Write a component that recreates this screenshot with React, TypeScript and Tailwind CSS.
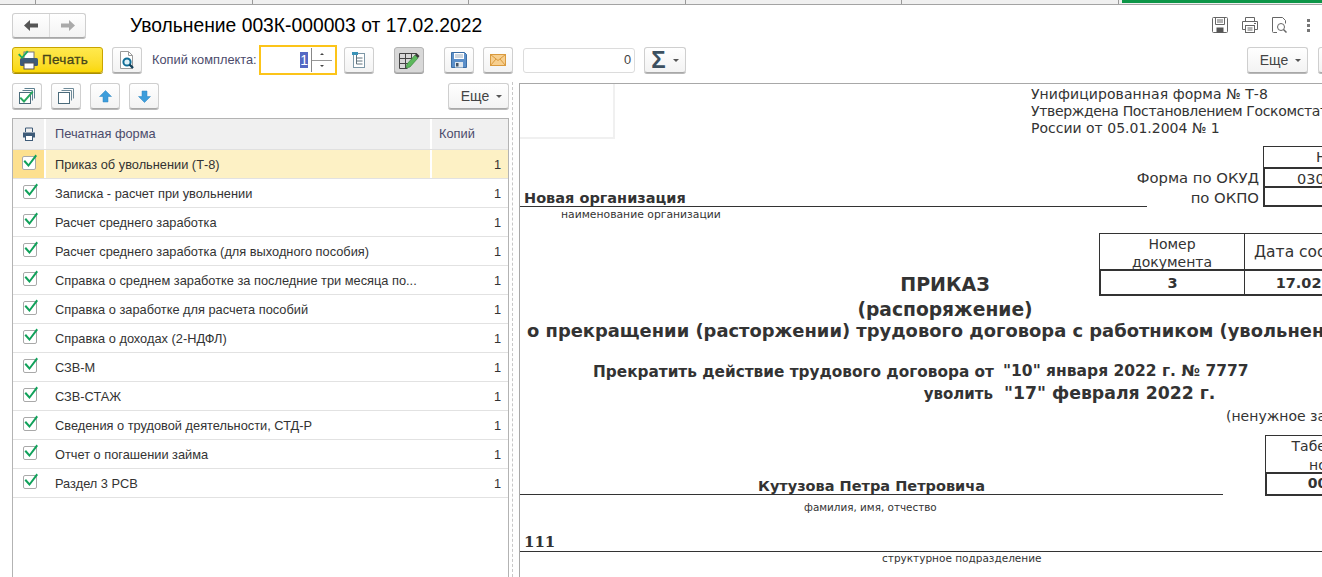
import React from 'react';

const FORMS = [
  'Приказ об увольнении (Т-8)',
  'Записка - расчет при увольнении',
  'Расчет среднего заработка',
  'Расчет среднего заработка (для выходного пособия)',
  'Справка о среднем заработке за последние три месяца по...',
  'Справка о заработке для расчета пособий',
  'Справка о доходах (2-НДФЛ)',
  'СЗВ-М',
  'СЗВ-СТАЖ',
  'Сведения о трудовой деятельности, СТД-Р',
  'Отчет о погашении займа',
  'Раздел 3 РСВ',
];

const TABS = ['w-[36px]', 'w-[217px]', 'w-[216px]', 'w-[217px]', 'w-[216px]', 'w-[217px]'];

const btn =
  'flex shrink-0 items-center justify-center rounded-[3px] border border-[#cfcfcf] border-b-[#a8a8a8] bg-linear-to-b from-white to-[#f3f3f3] shadow-[0_1px_0_#b8b8b8]';

const Caret = () => <span className="ml-[7px] h-0 w-0 border-x-[3px] border-t-[3px] border-x-transparent border-t-[#555]" />;

const Check = () => (
  <svg width="16" height="17" viewBox="0 0 16 17">
    <rect x="0.5" y="3.5" width="13" height="13" rx="1.5" fill="#fff" stroke="#a9a9a9" />
    <path d="M3 7l3.5 4L13.5 1.5l1.5 1.5-8.5 11L1.5 8.5z" fill="#10a15a" />
  </svg>
);

const PrinterColor = () => (
  <svg width="22" height="22" viewBox="0 0 22 22">
    <rect x="6" y="3" width="10" height="7" fill="#fff" stroke="#777" />
    <rect x="2" y="9" width="18" height="8" rx="1.5" fill="#3e5b78" />
    <rect x="6" y="14" width="10" height="6" fill="#fff" stroke="#555" />
    <path d="M1.5 4.5l2.5 3 5-6 1.5 1.3-6.3 7.2L0 5.8z" fill="#1da861" />
  </svg>
);

const Preview = () => (
  <svg width="18" height="20" viewBox="0 0 18 20">
    <path d="M2.5 1.5h8l4 4v13h-12z" fill="#fff" stroke="#9a9a9a" />
    <path d="M10.5 1.5v4h4" fill="none" stroke="#9a9a9a" />
    <circle cx="9" cy="12" r="3.6" fill="#dff1f8" stroke="#0f6d96" strokeWidth="2" />
    <path d="M11.5 14.5l3.5 3.5" stroke="#123f58" strokeWidth="2.4" />
  </svg>
);

const TreeDoc = () => (
  <svg width="16" height="18" viewBox="0 0 16 18">
    <rect x="2.5" y="2.5" width="11" height="14" fill="#fff" stroke="#7d97a6" />
    <rect x="1" y="1" width="6" height="3" fill="#3a93b8" />
    <path d="M5.5 4v9M5.5 7h6M5.5 10h6M5.5 13h6" stroke="#60727c" fill="none" />
  </svg>
);

const TablePencil = () => (
  <svg width="22" height="20" viewBox="0 0 22 20">
    <path d="M1.5 3.5h17M1.5 8.5h17M1.5 13.5h12M1.5 18.5h8M1.5 3.5v15M7.5 3.5v15M13.5 3.5v10" stroke="#444" fill="none" />
    <path d="M8 18l1-4L17 5l3 3-8 9z" fill="#5cb85c" stroke="#2e7d32" strokeWidth="0.6" />
    <path d="M17 5l1.5-2 3 3-1.5 2z" fill="#3a3a3a" />
  </svg>
);

const Floppy = () => (
  <svg width="16" height="16" viewBox="0 0 16 16">
    <path d="M0.5 0.5h13l2 2v13H0.5z" fill="#5b8fc9" stroke="#3b6ea5" />
    <rect x="3" y="1" width="10" height="6" fill="#fff" />
    <path d="M4 3h8M4 5h8" stroke="#9ab" />
    <rect x="4" y="10" width="8" height="5.5" fill="#dfe7ee" />
    <rect x="5" y="11" width="2.5" height="3.5" fill="#456" />
  </svg>
);

const Mail = () => (
  <svg width="16" height="12" viewBox="0 0 16 12">
    <rect x="0.5" y="0.5" width="15" height="11" fill="#f7cf8f" stroke="#d99a3e" />
    <path d="M0.5 0.5L8 6.5l7.5-6M0.5 11.5L6 5M15.5 11.5L10 5" fill="none" stroke="#d99a3e" />
  </svg>
);

const CheckAll = () => (
  <svg width="18" height="18" viewBox="0 0 18 18">
    <path d="M6.5 1.5h10v10M4.5 3.5h10v10" fill="none" stroke="#5b7f8f" />
    <rect x="1.5" y="5.5" width="11" height="11" fill="#fff" stroke="#4a6a7a" />
    <path d="M3 10l3 3 8-9 1.5 1.3L6 16 1.5 11.3z" fill="#27a85f" />
  </svg>
);

const UncheckAll = () => (
  <svg width="18" height="18" viewBox="0 0 18 18">
    <path d="M6.5 1.5h10v10M4.5 3.5h10v10" fill="none" stroke="#6e8a98" />
    <rect x="1.5" y="5.5" width="11" height="11" fill="#fff" stroke="#4a6a7a" />
  </svg>
);

const Arrow = ({ down }: { down?: boolean }) => (
  <svg width="13" height="13" viewBox="0 0 13 13">
    <path d={down ? 'M4 1h5v5.5h3.5L6.5 12.5 .5 6.5H4z' : 'M4 12h5V6.5h3.5L6.5 .5 .5 6.5H4z'} fill="#3d9ddb" stroke="#2f86c0" strokeWidth="0.5" />
  </svg>
);

const GrayIcons = () => (
  <div className="mr-[12px] flex items-center gap-[14px]">
    <svg width="16" height="16" viewBox="0 0 16 16" fill="none" stroke="#666">
      <path d="M.5 1.5a1 1 0 0 1 1-1h13a1 1 0 0 1 1 1v13a1 1 0 0 1-1 1h-13a1 1 0 0 1-1-1z" />
      <path d="M3.5.5v7h9v-7M5 3h6M5 5h6" />
      <rect x="4.5" y="10.5" width="7" height="5" fill="#555" stroke="none" />
    </svg>
    <svg width="16" height="16" viewBox="0 0 16 16" fill="none" stroke="#666">
      <path d="M3.5 4.5V.5h9v4M3.5 12.5h-3v-8h15v8h-3" />
      <rect x="3.5" y="8.5" width="9" height="7" />
      <path d="M5.5 11h5M5.5 13h5M12 6.5h2" />
    </svg>
    <svg width="16" height="16" viewBox="0 0 16 16" fill="none" stroke="#666">
      <path d="M5 15.5H1.5a1 1 0 0 1-1-1V.5h10l3 3v3" />
      <circle cx="9" cy="10" r="3.5" />
      <path d="M11.5 12.5l3 3" strokeWidth="1.5" />
    </svg>
    <div className="ml-[5px] flex flex-col gap-[2px]">
      <span className="h-[3px] w-[3px] bg-[#777]" />
      <span className="h-[3px] w-[3px] bg-[#777]" />
      <span className="h-[3px] w-[3px] bg-[#777]" />
    </div>
  </div>
);

const Doc = () => (
  <div className="w-[1100px] font-['DejaVu_Sans',sans-serif] text-[14px] text-[#333]">
    <div className="flex h-[55px]">
      <div className="h-[55px] w-[95px] border-r-2 border-b-2 border-[#f0f0f0]" />
      <div className="ml-[416px] pt-[2px] leading-[17px] whitespace-nowrap">
        <div className="tracking-[0.07px]">Унифицированная форма № Т-8</div>
        <div className="tracking-[-0.35px]">Утверждена Постановлением Госкомстата</div>
        <div>России от 05.01.2004 № 1</div>
      </div>
    </div>
    <div className="flex h-[68px]">
      <div className="flex w-[627px] items-end border-b border-[#333] pl-[4px] text-[14.5px] leading-[16px] font-bold">Новая организация</div>
      <div className="w-[112px] pt-[29px] text-right text-[14.8px] leading-[20px] whitespace-nowrap">
        <div className="ml-[-20px]">Форма по ОКУД</div>
        <div>по ОКПО</div>
      </div>
      <div className="mt-[7px] ml-[4px] w-[120px] text-[14.5px] leading-[20px]">
        <div className="h-[21px] border border-b-0 border-[#333] pl-[52px]">Номер</div>
        <div className="h-[21px] border-2 border-[#333] pl-[32px]">0301006</div>
        <div className="h-[19px] border-2 border-t-0 border-[#333]" />
      </div>
    </div>
    <div className="h-[15px] pl-[41px] text-[10.8px] leading-[15px]">наименование организации</div>
    <div className="flex h-[74px] items-end">
      <div className="ml-[331px] w-[188px] text-center text-[19px] leading-[24px] font-bold">ПРИКАЗ</div>
      <div className="ml-[60px] flex h-[63px] w-[300px] border border-[#333] text-center text-[14px] leading-[18px]">
        <div className="flex w-[145px] shrink-0 flex-col border-r border-[#333]">
          <div className="h-[37px] border-b-2 border-[#333] px-[20px] pt-[1px]">Номер документа</div>
          <div className="flex-1 border-b border-l border-[#333] pt-[3px] text-[14.5px] font-bold">3</div>
        </div>
        <div className="flex min-w-0 flex-1 flex-col">
          <div className="h-[37px] border-b-2 border-[#333] pt-[9px] pl-[9px] text-left text-[15.5px] whitespace-nowrap">Дата составления</div>
          <div className="flex-1 border-b border-[#333] pt-[3px] text-[14.5px] font-bold">17.02.2022</div>
        </div>
      </div>
    </div>
    <div className="mt-[3px] h-[21px] w-[850px] text-center text-[18.7px] leading-[21px] font-bold">(распоряжение)</div>
    <div className="pl-[7px] text-[17.9px] leading-[22px] font-bold whitespace-nowrap">о прекращении (расторжении) трудового договора с работником (увольнении)</div>
    <div className="mt-[19px] flex h-[22px] items-center text-[15.3px] font-bold whitespace-nowrap">
      <div className="ml-[73px] w-[402px]">Прекратить действие трудового договора от</div>
      <div className="ml-[8px] text-[15.5px]">"10" января 2022 г. № 7777</div>
    </div>
    <div className="flex h-[22px] items-center font-bold whitespace-nowrap">
      <div className="w-[473px] text-right text-[15px]">уволить</div>
      <div className="ml-[11px] text-[17.3px]">"17" февраля 2022 г.</div>
    </div>
    <div className="ml-[706px] h-[22px] leading-[22px] whitespace-nowrap">(ненужное зачеркнуть)</div>
    <div className="flex h-[68px] items-end">
      <div className="flex h-[16px] w-[703px] items-center justify-center border-b border-[#333] text-[14.5px] font-bold">Кутузова Петра Петровича</div>
      <div className="mt-[8px] ml-[42px] flex h-[61px] w-[134px] flex-col self-start border border-[#333] text-center leading-[19px]">
        <div className="h-[38px] border-b-2 border-[#333] px-[20px] pt-[1px]">Табельный номер</div>
        <div className="flex-1 border-x border-b border-[#333] font-bold">00000</div>
      </div>
    </div>
    <div className="h-[24px] pl-[284px] text-[10.4px] leading-[24px]">фамилия, имя, отчество</div>
    <div className="flex h-[33px] items-end border-b border-[#333] pl-[4px] font-['DejaVu_Serif',serif] text-[15px] leading-[18px] font-bold">111</div>
    <div className="pl-[362px] text-[10.5px] leading-[13px]">структурное подразделение</div>
  </div>
);

export default function App() {
  return (
    <div className="h-[577px] w-[1322px] overflow-hidden bg-white font-['Liberation_Sans',Arial,sans-serif] text-[12.8px] text-[#333]">
      <div className="flex h-[5px] border-b border-[#a3a3a3] bg-[#f0f0f0]">
        {TABS.map((w, i) => (
          <div key={i} className={`${w} border-r border-[#9a9a9a]`} />
        ))}
        <div className="ml-[3px] h-[3px] flex-1 bg-[#0d9648]" />
      </div>

      <div className="flex h-[40px] items-center pl-3">
        <div className={`${btn} h-[25px] w-[74px]`}>
          <div className="flex h-full w-[37px] items-center justify-center border-r border-[#dcdcdc]">
            <svg width="14" height="11" viewBox="0 0 14 11"><path d="M6 0v3.5h8v4H6V11L0 5.5z" fill="#555" /></svg>
          </div>
          <div className="flex h-full flex-1 items-center justify-center">
            <svg width="14" height="11" viewBox="0 0 14 11"><path d="M8 0v3.5H0v4h8V11l6-5.5z" fill="#aaa" /></svg>
          </div>
        </div>
        <h1 className="ml-[44px] pt-[1px] text-[19.3px] leading-[24px] text-black">Увольнение 003К-000003 от 17.02.2022</h1>
        <div className="ml-auto">
          <GrayIcons />
        </div>
      </div>

      <div className="mb-[8px] flex h-[30px] items-center overflow-hidden pl-3">
        <button className="flex h-[26px] w-[91px] shrink-0 items-center rounded-[3px] border border-[#c9a400] bg-linear-to-b from-[#ffe94d] to-[#fad800] pl-[5px] text-[13.5px] tracking-[0.3px] text-[#45451a] shadow-[0_1px_0_#a89000] [-webkit-text-stroke:0.3px_#45451a]">
          <PrinterColor />
          <span className="ml-[2px]">Печать</span>
        </button>
        <div className={`${btn} ml-[9px] h-[26px] w-[30px]`}><Preview /></div>
        <span className="ml-[10px] w-[104px] shrink-0 whitespace-nowrap text-[#4b4b6b]">Копий комплекта:</span>
        <div className="ml-[3px] flex h-[30px] w-[78px] shrink-0 items-center justify-end border-2 border-[#fcc419] pr-[3px] text-[14px]">
          <span className="bg-[#5468c4] leading-[16px] text-white">1</span>
          <div className="ml-[3px] flex h-[24px] w-[21px] flex-col border-l border-[#888]">
            <div className="flex flex-1 items-center justify-center border-b border-[#999]"><span className="h-0 w-0 border-x-[2px] border-b-[2px] border-x-transparent border-b-[#444]" /></div>
            <div className="flex flex-1 items-center justify-center"><span className="h-0 w-0 border-x-[2px] border-t-[2px] border-x-transparent border-t-[#444]" /></div>
          </div>
        </div>
        <div className={`${btn} ml-[7px] h-[26px] w-[30px]`}><TreeDoc /></div>
        <div className="ml-[20px] flex h-[26px] w-[30px] shrink-0 items-center justify-center rounded-[3px] border border-[#b5b5b5] bg-[#d8d8d8] shadow-[0_1px_0_#a0a0a0]"><TablePencil /></div>
        <div className={`${btn} ml-[20px] h-[26px] w-[30px]`}><Floppy /></div>
        <div className={`${btn} ml-[9px] h-[26px] w-[30px]`}><Mail /></div>
        <div className="ml-[10px] flex h-[25px] w-[112px] shrink-0 items-center justify-end rounded-[3px] border border-[#dcdcdc] pr-[3px] text-[#444]">0</div>
        <div className={`${btn} ml-[9px] h-[26px] w-[42px] text-[#3c5060]`}>
          <span className="text-[24px] leading-[20px] font-bold">Σ</span>
          <Caret />
        </div>
        <div className={`${btn} ml-[561px] h-[26px] w-[61px] pl-[6px] text-[14px] text-[#444]`}>
          Еще
          <Caret />
        </div>
        <div className={`${btn} ml-[10px] h-[26px] w-[30px]`} />
      </div>

      <div className="flex h-[494px]">
        <div className="ml-3 w-[497px] shrink-0">
          <div className="flex h-[35px] items-start">
            <div className={`${btn} h-[26px] w-[30px]`}><CheckAll /></div>
            <div className={`${btn} ml-[9px] h-[26px] w-[30px]`}><UncheckAll /></div>
            <div className={`${btn} ml-[9px] h-[26px] w-[30px]`}><Arrow /></div>
            <div className={`${btn} ml-[9px] h-[26px] w-[30px]`}><Arrow down /></div>
            <div className={`${btn} ml-auto h-[26px] w-[61px] pl-[6px] text-[14px] text-[#444]`}>
              Еще
              <Caret />
            </div>
          </div>
          <div className="h-[459px] border-x border-t border-[#b3b3b3]">
            <div className="flex h-[31px] border-b border-[#e0e0e0] bg-[#f0f0f0] text-[#4b4b6b]">
              <div className="flex w-[33px] items-center justify-center border-r-2 border-white">
                <svg width="14" height="14" viewBox="0 0 14 14">
                  <path d="M3.5 5V1h7v4" fill="none" stroke="#3e5b78" />
                  <path d="M1 5.5h12a1 1 0 0 1 0 0v5H1z" fill="#3e5b78" />
                  <rect x="3.5" y="8.5" width="7" height="5" fill="#fff" stroke="#3e5b78" />
                </svg>
              </div>
              <div className="flex flex-1 items-center pl-[9px]">Печатная форма</div>
              <div className="flex w-[78px] items-center border-l-2 border-white pl-[7px]">Копий</div>
            </div>
            {FORMS.map((name, i) => (
              <div key={name} className={`flex h-[29px] border-b border-[#e2e2e2] ${i === 0 ? 'bg-[#fdf1c5]' : ''}`}>
                <div className={`flex w-[33px] justify-center pt-[3px] pl-[2px] ${i === 0 ? 'border-r-2 border-white bg-[#fde08f]' : ''}`}><Check /></div>
                <div className="flex flex-1 items-center pt-[2px] pl-[9px]">{name}</div>
                <div className={`flex w-[78px] items-center justify-end pt-[2px] pr-[7px] ${i === 0 ? 'border-l-2 border-white' : ''}`}>1</div>
              </div>
            ))}
          </div>
        </div>
        <div className="mt-[-1px] ml-[3px] w-[1px] border-l border-dashed border-[#c8c8c8]" />
        <div className="ml-[6px] min-w-0 flex-1 overflow-hidden border-t border-l border-[#a8a8a8]">
          <Doc />
        </div>
      </div>
    </div>
  );
}
